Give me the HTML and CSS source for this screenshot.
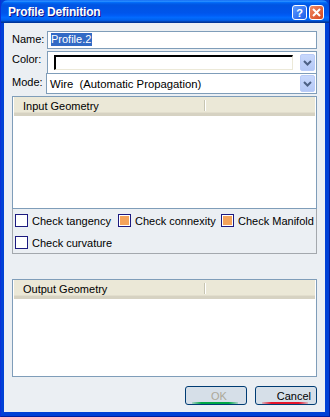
FILE: index.html
```html
<!DOCTYPE html>
<html lang="en">
    <head>
        <meta charset="UTF-8" />
        <title>Profile Definition</title>
        <link rel="stylesheet" href="styles.css">
    </head>
    <body>
        <div class="window">
            <header class="titlebar">
                <span class="title">Profile Definition</span>
                <div class="title-buttons">
                    <span class="tb help">?</span>
                    <span class="tb close">
                        <svg width="9" height="9" viewBox="0 0 9 9">
                            <path d="M1 1 L8 8 M8 1 L1 8" stroke="#fff" stroke-width="2" />
                        </svg>
                    </span>
                </div>
            </header>

            <main class="client">
                <div class="field-row name-row">
                    <label>Name:</label>
                    <div class="textbox"><span class="selected">Profile.2</span></div>
                </div>

                <div class="field-row color-row">
                    <label>Color:</label>
                    <div class="color-box">
                        <div class="color-field"></div>
                        <span class="drop"><svg width="9" height="6" viewBox="0 0 9 6"><path d="M1 1 L4.5 4.5 L8 1" fill="none" stroke="#4d6185" stroke-width="2" /></svg></span>
                    </div>
                </div>

                <div class="field-row mode-row">
                    <label>Mode:</label>
                    <div class="combo">
                        <span class="combo-text">Wire&nbsp; (Automatic Propagation)</span>
                        <span class="drop"><svg width="9" height="6" viewBox="0 0 9 6"><path d="M1 1 L4.5 4.5 L8 1" fill="none" stroke="#4d6185" stroke-width="2" /></svg></span>
                    </div>
                </div>

                <section class="list input-list">
                    <div class="list-head">
                        <span class="col-main">Input Geometry</span>
                        <span class="col-rest"></span>
                    </div>
                    <div class="list-body"></div>
                </section>

                <section class="checks">
                    <label class="check"><span class="box"></span>Check tangency</label>
                    <label class="check"><span class="box on"></span>Check connexity</label>
                    <label class="check"><span class="box on"></span>Check Manifold</label>
                    <label class="check"><span class="box"></span>Check curvature</label>
                </section>

                <section class="list output-list">
                    <div class="list-head">
                        <span class="col-main">Output Geometry</span>
                        <span class="col-rest"></span>
                    </div>
                    <div class="list-body"></div>
                </section>

                <footer class="buttons">
                    <button class="btn ok" disabled>OK</button>
                    <button class="btn cancel">Cancel</button>
                </footer>
            </main>
        </div>
    </body>
</html>
```

FILE: styles.css
```css
body {
    margin: 0;
    padding: 0;
    font-family: "Liberation Sans", Arial, sans-serif;
    font-size: 11px;
    color: #000;
}

.window {
    width: 330px;
    height: 417px;
    box-sizing: border-box;
    display: flex;
    flex-direction: column;
    background: #0041d6;
    border-left: 1px solid #0831d9;
    border-right: 1px solid #001ea0;
    border-bottom: 1px solid #001ea0;
}

.titlebar {
    height: 23px;
    display: flex;
    align-items: center;
    justify-content: space-between;
    padding: 0 5px 0 7px;
    border-radius: 7px 7px 0 0;
    background: linear-gradient(to bottom, #0058ee 0%, #3593ff 4%, #288eff 6%, #127dff 8%, #036ffc 10%, #0262ee 14%, #0057e5 20%, #0054e3 24%, #0055eb 56%, #005bf5 66%, #026afe 76%, #0062ef 86%, #0052d6 92%, #0040ab 94%, #003092 100%);
}

.title {
    color: #fff;
    font-weight: bold;
    font-size: 12px;
    letter-spacing: -0.2px;
    text-shadow: 1px 1px #0f1089;
    padding-top: 1px;
}

.title-buttons {
    display: flex;
    gap: 2px;
    padding-top: 2px;
}

.tb {
    width: 13px;
    height: 13px;
    border: 1px solid #fff;
    border-radius: 3px;
    display: flex;
    align-items: center;
    justify-content: center;
    color: #fff;
    font-weight: bold;
    font-size: 11px;
}

.help {
    background: linear-gradient(135deg, #5d9bff, #1d5be8);
}

.close {
    background: linear-gradient(135deg, #f08a64, #d7451d);
}

.client {
    flex: 1;
    margin: 0 4px 4px 3px;
    padding: 8px 8px 0 8px;
    background: #ebeff3;
    display: flex;
    flex-direction: column;
}

.field-row {
    display: flex;
    align-items: flex-start;
}

.field-row label {
    width: 35px;
    flex: none;
    padding-top: 2px;
}

.textbox {
    flex: 1;
    height: 18px;
    box-sizing: border-box;
    border: 1px solid #7f9db9;
    background: #fff;
    padding: 1px 0 0 3px;
}

.selected {
    background: #316ac5;
    color: #fff;
    padding: 0 1px 1px 0;
}

.color-row {
    margin-top: 2px;
}

.color-box {
    flex: 1;
    height: 22px;
    box-sizing: border-box;
    border: 1px solid #7f9db9;
    border-bottom: none;
    background: #fff;
    display: flex;
    align-items: center;
    padding: 0 1px 0 6px;
}

.color-field {
    flex: 1;
    height: 15px;
    box-sizing: border-box;
    border-top: 2px solid #000;
    border-left: 2px solid #000;
    border-right: 1px solid #ece9d8;
    border-bottom: 1px solid #ece9d8;
    margin-right: 7px;
}

.drop {
    width: 15px;
    height: 17px;
    box-sizing: border-box;
    border: 1px solid #b9cbf7;
    border-radius: 2px;
    background: linear-gradient(to bottom, #c8d8fc, #b4c8f6);
    display: flex;
    align-items: center;
    justify-content: center;
}

.field-row.mode-row label {
    padding-top: 3px;
}

.combo {
    flex: 1;
    margin-left: -1px;
    height: 21px;
    box-sizing: border-box;
    border: 1px solid #7f9db9;
    background: #fff;
    display: flex;
    align-items: center;
    justify-content: space-between;
    padding: 0 1px 0 3px;
    font-size: 11.3px;
}

.list {
    margin-top: 2px;
    border: 1px solid #7f9db9;
    background: #fff;
    display: flex;
    flex-direction: column;
}

.input-list {
    height: 113px;
    box-sizing: border-box;
}

.output-list {
    margin-top: 25px;
    height: 98px;
    box-sizing: border-box;
}

.list-head {
    height: 19px;
    box-sizing: border-box;
    display: flex;
    background: #ebe8d7;
    border-bottom: 3px solid #d6d2c2;
    box-shadow: inset 0 -1px #e2decd;
    margin: 0 1px;
}

.col-main {
    width: 191px;
    box-sizing: border-box;
    padding: 0 0 0 9px;
    border-right: 1px solid #c7c5b2;
    box-shadow: 1px 0 #fff;
    margin: 3px 0 2px 0;
    line-height: 12px;
}

.col-rest {
    flex: 1;
}

.list-body {
    flex: 1;
}

.checks {
    height: 45px;
    box-sizing: border-box;
    border: 1px solid #a3a8ad;
    border-top: none;
    display: flex;
    flex-wrap: wrap;
    align-content: flex-start;
    padding: 5px 0 0 2px;
    row-gap: 9px;
}

.check {
    display: flex;
    align-items: center;
    gap: 4px;
    height: 13px;
    flex: none;
    white-space: nowrap;
}

.check:nth-child(1),
.check:nth-child(2) {
    width: 103px;
}

.check:nth-child(3) {
    width: 88px;
}

.box {
    width: 13px;
    height: 13px;
    box-sizing: border-box;
    border: 1px solid #1c1a80;
    background: #fff;
    flex: none;
}

.box.on {
    background: #f4a35a;
    box-shadow: inset 0 0 0 1px #fff;
}

.buttons {
    display: flex;
    justify-content: flex-end;
    gap: 8px;
    margin-top: 9px;
}

.btn {
    width: 62px;
    height: 19px;
    box-sizing: border-box;
    border: 1px solid #003c74;
    border-radius: 3px;
    background: #d6dfe8;
    font-family: "Liberation Sans", Arial, sans-serif;
    font-size: 11px;
    padding: 0;
    position: relative;
}

.btn::after {
    content: "";
    position: absolute;
    left: 6px;
    right: 8px;
    bottom: 0;
    height: 2px;
}

.ok {
    color: #aca899;
    padding-left: 6px;
}

.ok::after {
    background: linear-gradient(to right, rgba(0, 170, 70, 0.2), #00a846 20%, #00a846 80%, rgba(0, 170, 70, 0.2));
}

.cancel {
    color: #000;
    text-align: right;
    padding-right: 5px;
}

.cancel::after {
    background: linear-gradient(to right, rgba(230, 20, 40, 0.2), #e6142a 20%, #e6142a 80%, rgba(230, 20, 40, 0.2));
}
```
